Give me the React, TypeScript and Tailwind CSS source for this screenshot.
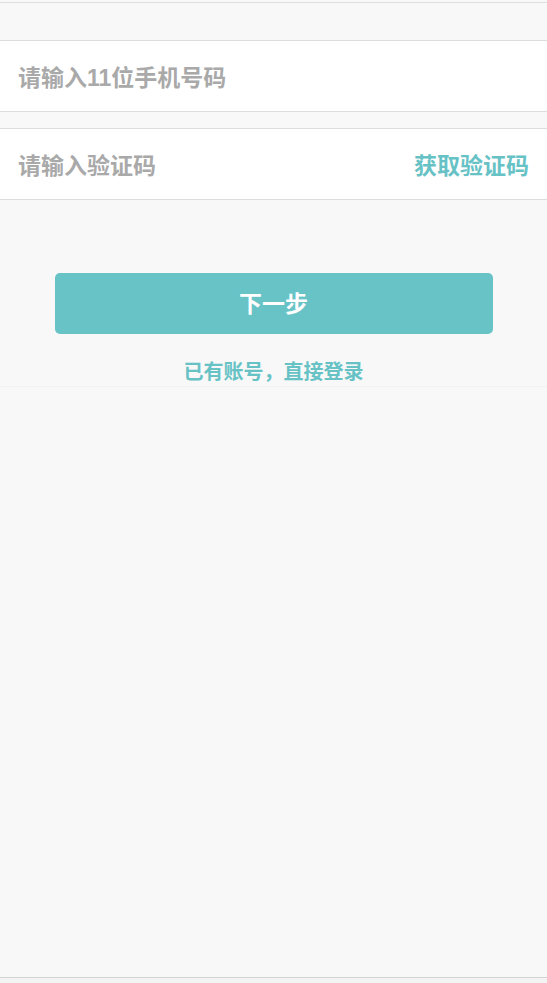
import React from "react";

export default function App() {
  const font = { fontFamily: '"Liberation Sans", "Noto Sans CJK SC", sans-serif' };
  return (
    <div className="w-[547px] h-[983px] bg-[#f8f8f8] flex flex-col overflow-hidden font-bold" style={font}>
      <div className="h-[2px] shrink-0" />
      <div className="h-[38px] shrink-0 border-t border-[#dedede]" />
      <div className="h-[72px] shrink-0 bg-white border-y border-[#dcdcdc] flex items-center px-[18px] pt-[4px]">
        <span className="text-[23px] text-[#a9a9a9] leading-none">请输入11位手机号码</span>
      </div>
      <div className="h-[16px] shrink-0" />
      <div className="h-[72px] shrink-0 bg-white border-y border-[#dcdcdc] flex items-center justify-between pl-[18px] pr-[18px] pt-[4px]">
        <span className="text-[23px] text-[#a9a9a9] leading-none">请输入验证码</span>
        <span className="text-[23px] text-[#67c2c5] leading-none">获取验证码</span>
      </div>
      <div className="flex flex-col items-center pt-[73px] border-b border-[#f2f2f2]">
        <button className="w-[438px] h-[61px] rounded-[5px] bg-[#67c3c6] text-white text-[23px] flex items-center justify-center leading-none pt-[2px]">
          下一步
        </button>
        <div className="h-[52px] flex items-center justify-center text-[20px] text-[#67c2c5] leading-none pt-[23px]">
          已有账号，直接登录
        </div>
      </div>
      <div className="flex-1" />
      <div className="h-[6px] shrink-0 border-t border-[#d4d4d4] bg-[#f3f3f3]" />
    </div>
  );
}
